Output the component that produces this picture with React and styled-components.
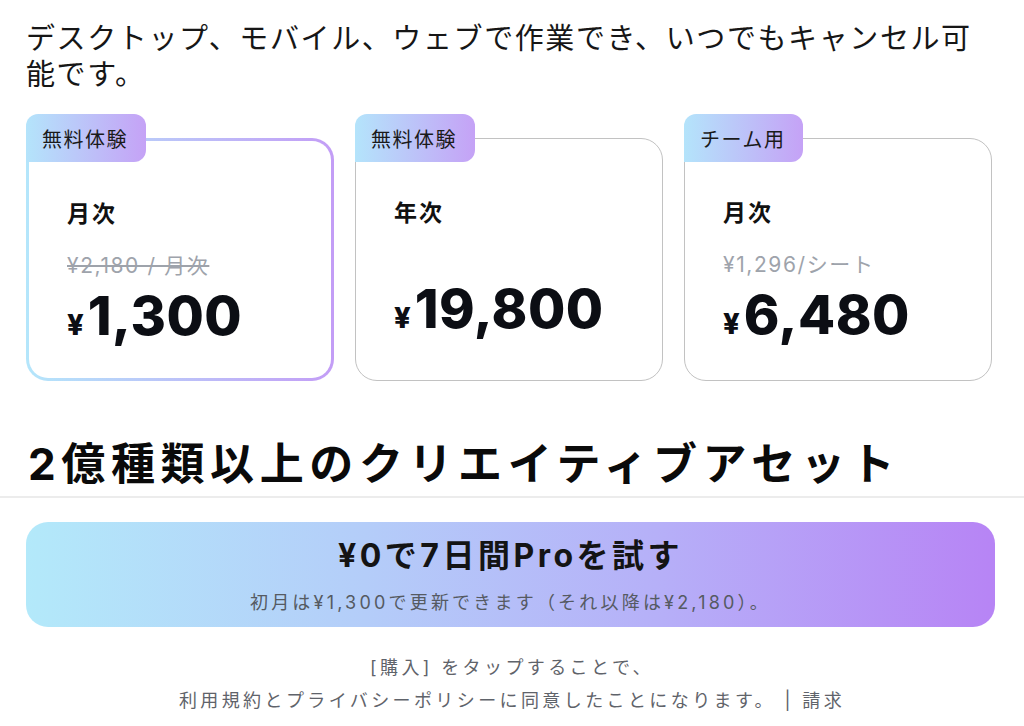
import React from "react";
import styled, { createGlobalStyle } from "styled-components";

const Global = createGlobalStyle`
  html, body { margin: 0; padding: 0; background: #fff; }
  body { font-family: Inter, "Noto Sans CJK JP", sans-serif; color: #111; overflow: hidden; }
`;

const Page = styled.div`
  width: 1024px;
  height: 726px;
  display: flex;
  flex-direction: column;
  overflow: hidden;
`;

const Intro = styled.p`
  margin: 0;
  padding: 21px 28px 0 26px;
  font-size: 29px;
  line-height: 36px;
  color: #161616;
  letter-spacing: 1.6px;
`;

const Cards = styled.div`
  display: grid;
  grid-template-columns: repeat(3, 308px);
  column-gap: 21px;
  padding: 21px 0 0 26px;
`;

const CardWrap = styled.div`
  position: relative;
  padding-top: 24px;
`;

const Card = styled.div`
  height: 243px;
  box-sizing: border-box;
  border-radius: 22px;
  padding: ${p => (p.$active ? "58px 0 0 38px" : "59px 0 0 38px")};
  border: ${p => (p.$active ? "3px solid transparent" : "1.5px solid #c2c2c2")};
  background: ${p =>
    p.$active
      ? "linear-gradient(#fff,#fff) padding-box, linear-gradient(90deg,#b4e6fb,#c39df6) border-box"
      : "#fff"};
  display: flex;
  flex-direction: column;
`;

const Badge = styled.div`
  position: absolute;
  top: 0;
  left: 0;
  height: 48px;
  padding: 0 18px 0 16px;
  display: flex;
  align-items: center;
  font-size: 20px;
  letter-spacing: 1.5px;
  color: #1a1a1a;
  border-radius: 12px 12px 12px 0;
  background: linear-gradient(90deg, #b4e4fb, #c5a2f6);
`;

const Term = styled.div`
  font-size: 23px;
  font-weight: 700;
  line-height: 30px;
  letter-spacing: 2px;
  color: #111;
`;

const OldPrice = styled.div`
  margin-top: 22px;
  height: 30px;
  font-size: 21px;
  line-height: 30px;
  letter-spacing: 1.6px;
  color: #9ea3ab;
  text-decoration: ${p => (p.$strike ? "line-through" : "none")};
  text-decoration-thickness: 1.5px;
`;

const Price = styled.div`
  margin-top: ${p => (p.$shift ? "1px" : "7px")};
  display: flex;
  align-items: baseline;
  font-family: Inter, sans-serif;
  font-weight: 800;
  color: #0c0e14;
`;

const Yen = styled.span`
  font-size: 29px;
  margin-right: 4px;
`;

const Amount = styled.span`
  font-size: 54px;
  line-height: 56px;
  letter-spacing: 0.5px;
`;

const Heading = styled.h2`
  margin: 0;
  padding: 55px 0 0 28px;
  font-size: 44px;
  line-height: 56px;
  font-weight: 700;
  letter-spacing: 5.6px;
  color: #0a0a0a;
`;

const Divider = styled.div`
  margin-top: 4px;
  height: 2px;
  background: #ececec;
`;

const CTA = styled.button`
  margin: 24px 29px 0 26px;
  height: 105px;
  border: none;
  border-radius: 22px;
  background: linear-gradient(90deg, #b3e9fa 0%, #b4cdf9 35%, #b6b0f8 65%, #b784f5 100%);
  display: flex;
  flex-direction: column;
  align-items: center;
  padding: 13px 0 0;
  font-family: inherit;
  cursor: pointer;
`;

const CTATitle = styled.span`
  font-size: 32px;
  line-height: 42px;
  font-weight: 700;
  color: #141414;
  letter-spacing: 3.5px;
`;

const CTASub = styled.span`
  margin-top: 14px;
  font-size: 18px;
  line-height: 24px;
  color: #555a62;
  letter-spacing: 3.2px;
`;

const Legal = styled.p`
  margin: 24px 0 0;
  text-align: center;
  font-size: 18px;
  line-height: 33px;
  color: #5f636a;
  letter-spacing: 3.4px;
`;

const plans = [
  { badge: "無料体験", term: "月次", old: "¥2,180 / 月次", strike: true, price: "1,300", active: true },
  { badge: "無料体験", term: "年次", old: "", price: "19,800", shift: true },
  { badge: "チーム用", term: "月次", old: "¥1,296/シート", price: "6,480" },
];

export default function App() {
  return (
    <Page>
      <Global />
      <Intro>デスクトップ、モバイル、ウェブで作業でき、いつでもキャンセル可能です。</Intro>
      <Cards>
        {plans.map((p, i) => (
          <CardWrap key={i}>
            <Card $active={p.active}>
              <Term>{p.term}</Term>
              <OldPrice $strike={p.strike}>{p.old}</OldPrice>
              <Price $shift={p.shift}>
                <Yen>¥</Yen>
                <Amount>{p.price}</Amount>
              </Price>
            </Card>
            <Badge>{p.badge}</Badge>
          </CardWrap>
        ))}
      </Cards>
      <Heading>2億種類以上のクリエイティブアセット</Heading>
      <Divider />
      <CTA>
        <CTATitle>¥0で7日間Proを試す</CTATitle>
        <CTASub>初月は¥1,300で更新できます（それ以降は¥2,180）。</CTASub>
      </CTA>
      <Legal>
        [購入] をタップすることで、
        <br />
        利用規約とプライバシーポリシーに同意したことになります。 | 請求
      </Legal>
    </Page>
  );
}
